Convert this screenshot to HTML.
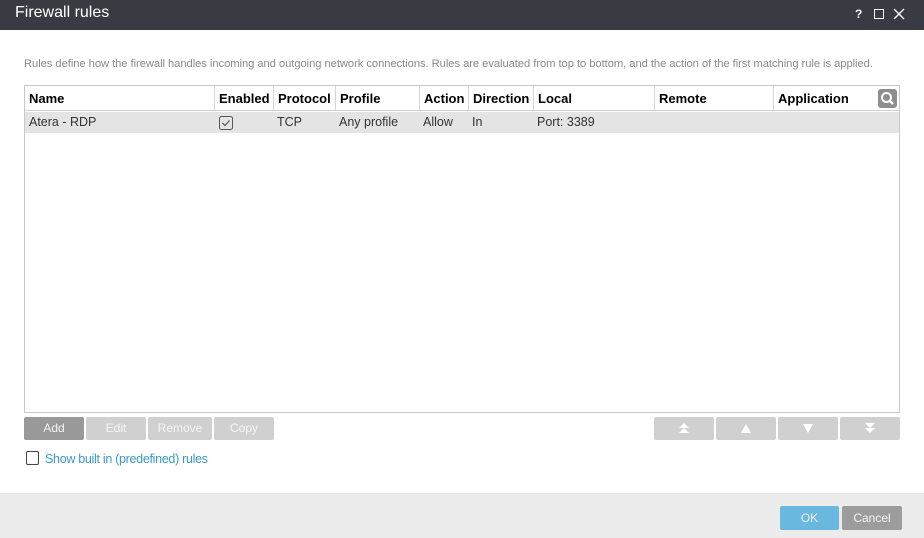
<!DOCTYPE html>
<html><head><style>
*{box-sizing:border-box;margin:0;padding:0}
body{width:924px;height:538px;background:#fff;font-family:"Liberation Sans",sans-serif;position:relative;overflow:hidden}
.abs{position:absolute}
.title{left:0;top:0;width:924px;height:30px;background:#383b42;color:#fff}
.title .t{left:15px;top:4px;font-size:16px}
.desc{left:24px;top:58px;font-size:11.2px;color:#8a8a8a;white-space:nowrap;letter-spacing:-0.05px}
.tbl{left:24px;top:85px;width:876px;height:328px;border:1px solid #c8c8c8}
.hdr{left:0;top:0;width:874px;height:25px;border-bottom:1px solid #d0d0d0;font-weight:bold;font-size:13px}
.row{left:0;top:26px;width:874px;height:21px;background:#e4e4e4;font-size:12.5px;color:#333}
.c{position:absolute;top:0;height:100%;padding-left:4px;line-height:25px;white-space:nowrap}
.hdr .c{border-left:1px solid #d6d6d6}
.row .c{line-height:21px}
.btn{position:absolute;top:417px;height:23px;background:#d0d0d0;color:#f4f4f4;font-size:12px;text-align:center;line-height:23px;border-radius:2px}
.btn svg{margin-top:6px}
.foot{left:0;top:493px;width:924px;height:45px;background:#ececec;border-top:1px solid #e0e0e0}
</style></head><body>
<div class="abs title"><div class="abs t">Firewall rules</div>
<div class="abs" style="left:855px;top:7px;font-size:12px;font-weight:bold">?</div>
<div class="abs" style="left:874px;top:9px;width:10px;height:10px;border:1.3px solid #fff"></div>
<svg class="abs" style="left:893px;top:8px" width="12" height="12"><path d="M1 1L11 11M11 1L1 11" stroke="#fff" stroke-width="1.4"/></svg>
</div>
<div class="abs desc">Rules define how the firewall handles incoming and outgoing network connections. Rules are evaluated from top to bottom, and the action of the first matching rule is applied.</div>
<div class="abs tbl">
<div class="abs hdr">
<div class="c" style="left:0;border-left:none">Name</div>
<div class="c" style="left:189px">Enabled</div>
<div class="c" style="left:248px">Protocol</div>
<div class="c" style="left:310px">Profile</div>
<div class="c" style="left:394px">Action</div>
<div class="c" style="left:443px">Direction</div>
<div class="c" style="left:508px">Local</div>
<div class="c" style="left:629px">Remote</div>
<div class="c" style="left:748px">Application</div>
<div class="abs" style="left:853px;top:3px;width:19px;height:19px;background:#8e8e8e;border-radius:3px">
<svg width="19" height="19"><circle cx="8.5" cy="8.5" r="4.5" fill="none" stroke="#fff" stroke-width="2"/><path d="M11.5 11.5L15 15" stroke="#fff" stroke-width="2.4"/></svg></div>
</div>
<div class="abs row">
<div class="c" style="left:0">Atera - RDP</div>
<div class="c" style="left:190px"><svg width="14" height="14" style="margin-top:4px"><rect x="0.5" y="0.5" width="13" height="13" rx="2" fill="none" stroke="#555"/><path d="M3.5 7l2.5 2.5 4.5-5" fill="none" stroke="#555" stroke-width="1.2"/></svg></div>
<div class="c" style="left:248px">TCP</div>
<div class="c" style="left:310px">Any profile</div>
<div class="c" style="left:394px">Allow</div>
<div class="c" style="left:443px">In</div>
<div class="c" style="left:508px">Port: 3389</div>
</div>
</div>
<div class="btn" style="left:24px;width:60px;background:#999">Add</div>
<div class="btn" style="left:86px;width:60px">Edit</div>
<div class="btn" style="left:148px;width:64px">Remove</div>
<div class="btn" style="left:214px;width:60px">Copy</div>
<div class="btn" style="left:654px;width:60px"><svg width="12" height="11"><path d="M6 0L11 5H1Z M6 5L11 10H1Z" fill="#fff"/></svg></div>
<div class="btn" style="left:716px;width:60px"><svg width="12" height="11"><path d="M6 1L11 10H1Z" fill="#fff"/></svg></div>
<div class="btn" style="left:778px;width:60px"><svg width="12" height="11"><path d="M1 1H11L6 10Z" fill="#fff"/></svg></div>
<div class="btn" style="left:840px;width:60px"><svg width="12" height="11"><path d="M1 0H11L6 5Z M1 5H11L6 10Z" fill="#fff"/></svg></div>
<div class="abs" style="left:26px;top:451px;width:13px;height:14px;border:1.3px solid #444;border-radius:2px"></div>
<div class="abs" style="left:45px;top:452px;font-size:12.5px;color:#3a9ac9;letter-spacing:-0.3px">Show built in (predefined) rules</div>
<div class="abs foot"></div>
<div class="btn" style="left:780px;top:506px;width:59px;height:24px;line-height:24px;background:#6ab7df">OK</div>
<div class="btn" style="left:842px;top:506px;width:60px;height:24px;line-height:24px;background:#9c9c9c">Cancel</div>
</body></html>
